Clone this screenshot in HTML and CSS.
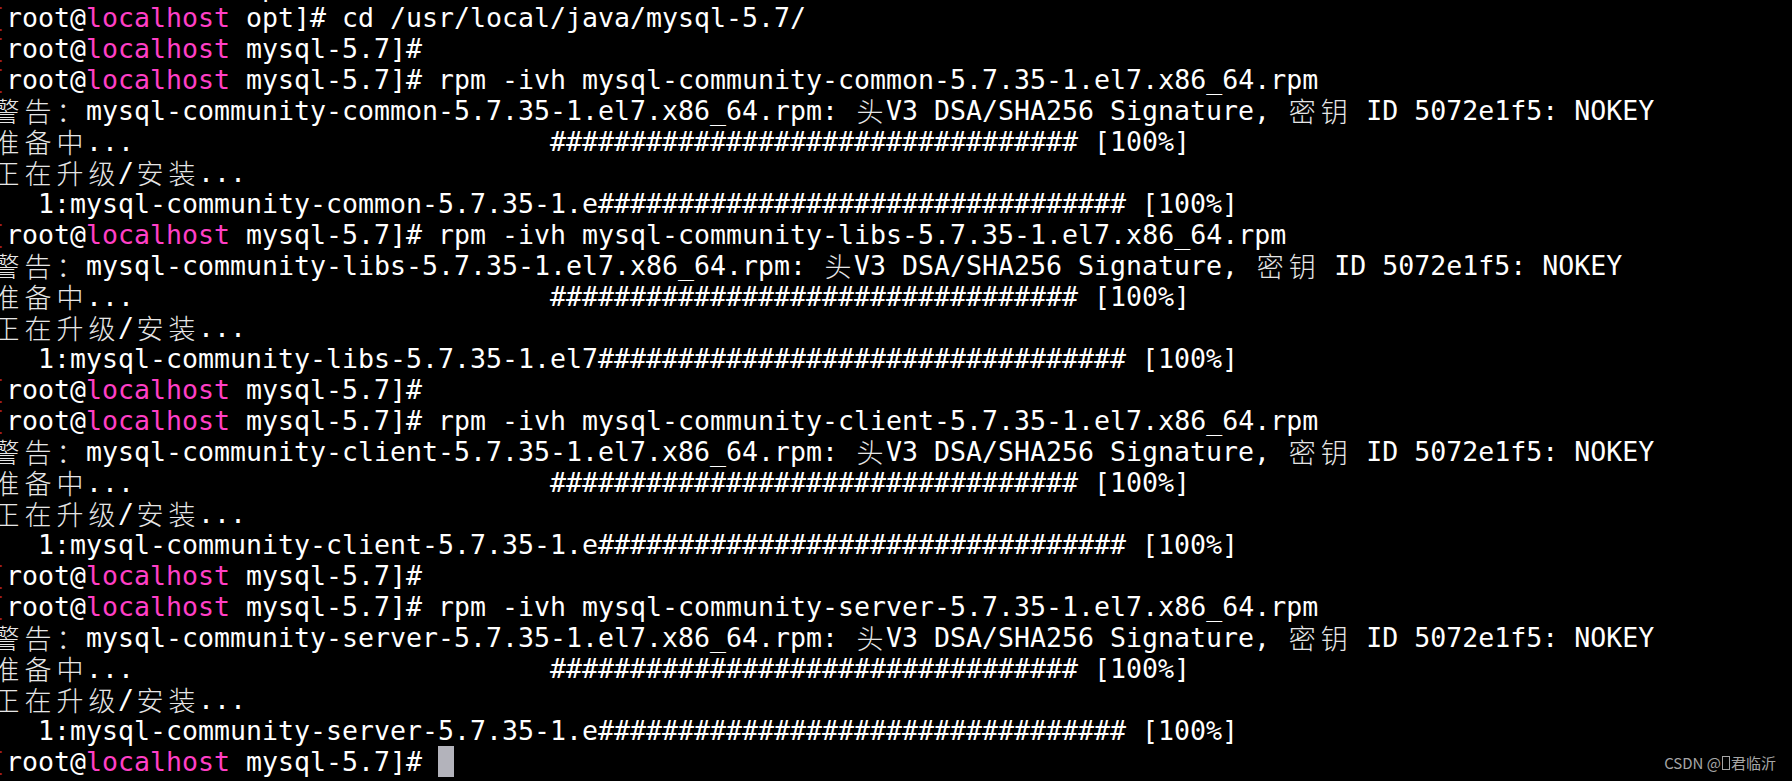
FILE: index.html
```html
<!DOCTYPE html>
<html lang="zh-CN">
<head>
<meta charset="utf-8">
<title>terminal</title>
<link rel="stylesheet" href="styles.css">
</head>
<body>
<div class="term">
<div class="line partial"><span class="br">[</span>root@<span class="host">localhost</span> opt]# ll</div>
<div class="line"><span class="br">[</span>root@<span class="host">localhost</span> opt]# cd /usr/local/java/mysql-5.7/</div>
<div class="line"><span class="br">[</span>root@<span class="host">localhost</span> mysql-5.7]#</div>
<div class="line"><span class="br">[</span>root@<span class="host">localhost</span> mysql-5.7]# rpm -ivh mysql-community-common-5.7.35-1.el7.x86_64.rpm</div>
<div class="line"><span class="c">警</span><span class="c">告</span><span class="c">：</span>mysql-community-common-5.7.35-1.el7.x86_64.rpm: <span class="c">头</span>V3 DSA/SHA256 Signature, <span class="c">密</span><span class="c">钥</span> ID 5072e1f5: NOKEY</div>
<div class="line"><span class="c">准</span><span class="c">备</span><span class="c">中</span>...                          ################################# [100%]</div>
<div class="line"><span class="c">正</span><span class="c">在</span><span class="c">升</span><span class="c">级</span>/<span class="c">安</span><span class="c">装</span>...</div>
<div class="line">   1:mysql-community-common-5.7.35-1.e################################# [100%]</div>
<div class="line"><span class="br">[</span>root@<span class="host">localhost</span> mysql-5.7]# rpm -ivh mysql-community-libs-5.7.35-1.el7.x86_64.rpm</div>
<div class="line"><span class="c">警</span><span class="c">告</span><span class="c">：</span>mysql-community-libs-5.7.35-1.el7.x86_64.rpm: <span class="c">头</span>V3 DSA/SHA256 Signature, <span class="c">密</span><span class="c">钥</span> ID 5072e1f5: NOKEY</div>
<div class="line"><span class="c">准</span><span class="c">备</span><span class="c">中</span>...                          ################################# [100%]</div>
<div class="line"><span class="c">正</span><span class="c">在</span><span class="c">升</span><span class="c">级</span>/<span class="c">安</span><span class="c">装</span>...</div>
<div class="line">   1:mysql-community-libs-5.7.35-1.el7################################# [100%]</div>
<div class="line"><span class="br">[</span>root@<span class="host">localhost</span> mysql-5.7]#</div>
<div class="line"><span class="br">[</span>root@<span class="host">localhost</span> mysql-5.7]# rpm -ivh mysql-community-client-5.7.35-1.el7.x86_64.rpm</div>
<div class="line"><span class="c">警</span><span class="c">告</span><span class="c">：</span>mysql-community-client-5.7.35-1.el7.x86_64.rpm: <span class="c">头</span>V3 DSA/SHA256 Signature, <span class="c">密</span><span class="c">钥</span> ID 5072e1f5: NOKEY</div>
<div class="line"><span class="c">准</span><span class="c">备</span><span class="c">中</span>...                          ################################# [100%]</div>
<div class="line"><span class="c">正</span><span class="c">在</span><span class="c">升</span><span class="c">级</span>/<span class="c">安</span><span class="c">装</span>...</div>
<div class="line">   1:mysql-community-client-5.7.35-1.e################################# [100%]</div>
<div class="line"><span class="br">[</span>root@<span class="host">localhost</span> mysql-5.7]#</div>
<div class="line"><span class="br">[</span>root@<span class="host">localhost</span> mysql-5.7]# rpm -ivh mysql-community-server-5.7.35-1.el7.x86_64.rpm</div>
<div class="line"><span class="c">警</span><span class="c">告</span><span class="c">：</span>mysql-community-server-5.7.35-1.el7.x86_64.rpm: <span class="c">头</span>V3 DSA/SHA256 Signature, <span class="c">密</span><span class="c">钥</span> ID 5072e1f5: NOKEY</div>
<div class="line"><span class="c">准</span><span class="c">备</span><span class="c">中</span>...                          ################################# [100%]</div>
<div class="line"><span class="c">正</span><span class="c">在</span><span class="c">升</span><span class="c">级</span>/<span class="c">安</span><span class="c">装</span>...</div>
<div class="line">   1:mysql-community-server-5.7.35-1.e################################# [100%]</div>
<div class="line"><span class="br">[</span>root@<span class="host">localhost</span> mysql-5.7]# <span class="cursor"> </span></div>
</div>
<div class="watermark">CSDN @<span class="tofu"></span>君临沂</div>
</body>
</html>
```

FILE: styles.css
```css
html, body {
  margin: 0;
  padding: 0;
  background: #000;
  width: 1792px;
  height: 781px;
  overflow: hidden;
}

.term {
  margin-top: -29px;
  margin-left: -10px;
  font-family: "DejaVu Sans Mono", "Noto Sans CJK SC", monospace;
  font-size: 26.58px;
  line-height: 31px;
  color: #ffffff;
}

.line {
  height: 31px;
  white-space: pre;
  overflow: visible;
}

.host {
  color: #ff3fc6;
}

.br {
  color: #9a1f1f;
}

.c {
  display: inline-block;
  width: 32px;
  text-align: center;
  font-family: "Noto Sans CJK SC", sans-serif;
  font-weight: 300;
  font-size: 27px;
  line-height: 31px;
  color: #e6e6e6;
  vertical-align: top;
}

.cursor {
  display: inline-block;
  width: 16px;
  height: 31px;
  background: #b3b3bb;
  vertical-align: top;
}

.watermark {
  position: absolute;
  right: 16px;
  bottom: 9px;
  font-family: "Noto Sans CJK SC", sans-serif;
  font-size: 15px;
  line-height: 18px;
  color: #a6a6a6;
  white-space: nowrap;
}

.tofu {
  display: inline-block;
  width: 6px;
  height: 12px;
  border: 1px solid #a6a6a6;
  margin: 0 1px;
  vertical-align: -1px;
}
```
